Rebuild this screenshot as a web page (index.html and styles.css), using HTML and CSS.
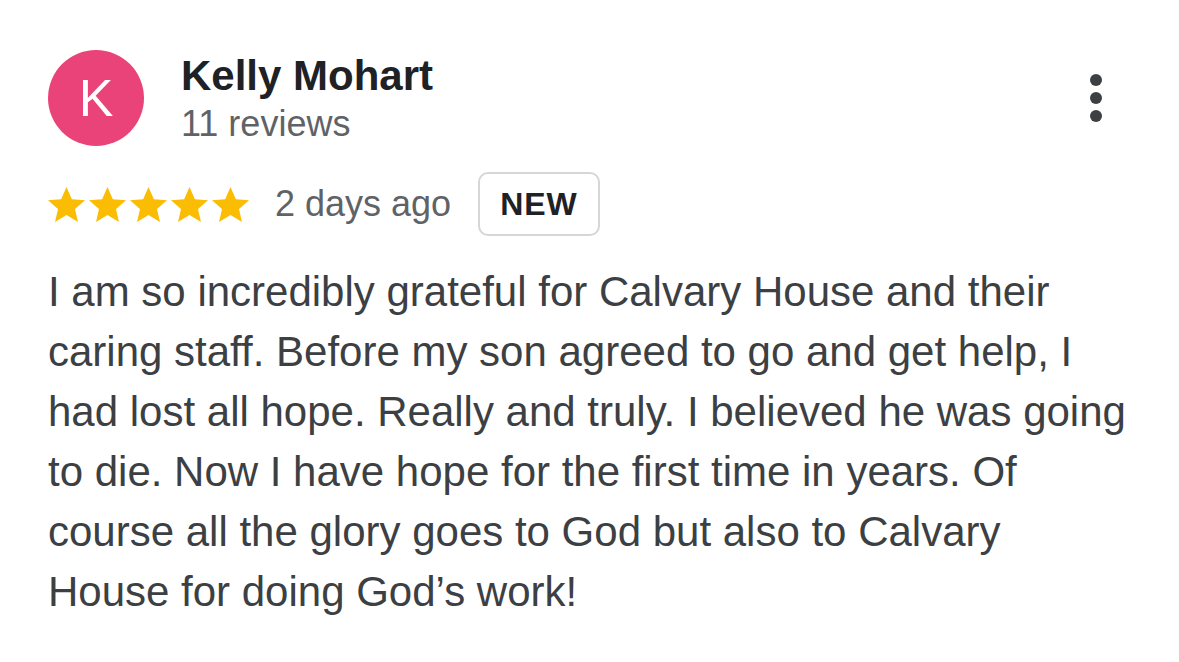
FILE: index.html
```html
<!DOCTYPE html>
<html>
<head>
  <title>Review</title>
  <link rel="stylesheet" href="styles.css">
</head>
<body>
  <div class="review">
    <div class="header">
      <div class="avatar">K</div>
      <div class="author">
        <div class="name">Kelly Mohart</div>
        <div class="count">11 reviews</div>
      </div>
      <div class="more">
        <span class="dot"></span>
        <span class="dot"></span>
        <span class="dot"></span>
      </div>
    </div>
    <div class="meta">
      <div class="stars">
        <svg viewBox="2 2 20 20"><path d="M12 2.5l2.9 6.6 7.1.6-5.4 4.7 1.6 7-6.2-3.7-6.2 3.7 1.6-7L2 9.7l7.1-.6z"/></svg>
        <svg viewBox="2 2 20 20"><path d="M12 2.5l2.9 6.6 7.1.6-5.4 4.7 1.6 7-6.2-3.7-6.2 3.7 1.6-7L2 9.7l7.1-.6z"/></svg>
        <svg viewBox="2 2 20 20"><path d="M12 2.5l2.9 6.6 7.1.6-5.4 4.7 1.6 7-6.2-3.7-6.2 3.7 1.6-7L2 9.7l7.1-.6z"/></svg>
        <svg viewBox="2 2 20 20"><path d="M12 2.5l2.9 6.6 7.1.6-5.4 4.7 1.6 7-6.2-3.7-6.2 3.7 1.6-7L2 9.7l7.1-.6z"/></svg>
        <svg viewBox="2 2 20 20"><path d="M12 2.5l2.9 6.6 7.1.6-5.4 4.7 1.6 7-6.2-3.7-6.2 3.7 1.6-7L2 9.7l7.1-.6z"/></svg>
      </div>
      <span class="date">2 days ago</span>
      <span class="badge">NEW</span>
    </div>
    <p class="text">I am so incredibly grateful for Calvary House and their caring staff. Before my son agreed to go and get help, I had lost all hope. Really and truly. I believed he was going to die. Now I have hope for the first time in years. Of course all the glory goes to God but also to Calvary House for doing God’s work!</p>
  </div>
</body>
</html>
```

FILE: styles.css
```css
body {
  margin: 0;
  background: #fff;
  font-family: "Liberation Sans", Arial, sans-serif;
}
.review {
  padding: 50px 48px 0 48px;
}
.header {
  display: flex;
  align-items: flex-start;
}
.avatar {
  width: 96px;
  height: 96px;
  border-radius: 50%;
  background: #e9437a;
  color: #fff;
  font-size: 52px;
  display: flex;
  align-items: center;
  justify-content: center;
  flex-shrink: 0;
}
.author {
  margin-left: 37px;
  flex: 1;
}
.name {
  font-size: 42px;
  font-weight: bold;
  color: #202124;
  line-height: 46px;
  margin-top: 3px;
}
.count {
  font-size: 36px;
  color: #5f6368;
  line-height: 40px;
  margin-top: 5px;
}
.more {
  display: flex;
  flex-direction: column;
  gap: 6px;
  margin-top: 24px;
  margin-right: 29px;
}
.dot {
  width: 12px;
  height: 12px;
  border-radius: 50%;
  background: #3c4043;
}
.meta {
  display: flex;
  align-items: center;
  margin-top: 26px;
}
.stars {
  display: flex;
  gap: 4px;
}
.stars svg {
  width: 37px;
  height: 37px;
  fill: #fbbc04;
}
.date {
  font-size: 36px;
  color: #5f6368;
  margin-left: 26px;
}
.badge {
  margin-left: 27px;
  border: 2px solid #d6d6d6;
  border-radius: 10px;
  padding: 12px 20px;
  font-size: 32px;
  line-height: 36px;
  font-weight: bold;
  color: #202124;
  letter-spacing: 1px;
}
.text {
  margin: 26px 0 0 0;
  font-size: 42px;
  line-height: 60px;
  color: #3c4043;
  width: 1082px;
}
```
